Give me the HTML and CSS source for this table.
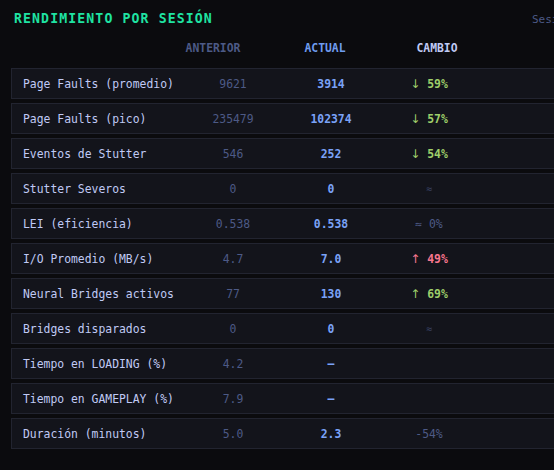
FILE: index.html
```html
<!DOCTYPE html>
<html lang="es">
<head>
<meta charset="utf-8">
<title>Rendimiento por sesión</title>
<link rel="stylesheet" href="styles.css">
</head>
<body>
<div class="panel">
  <div class="top">
    <h1 class="title">RENDIMIENTO POR SESIÓN</h1>
    <span class="sub">Sesión actual vs anterior</span>
  </div>
  <div class="head">
    <span></span>
    <span class="h-prev">ANTERIOR</span>
    <span class="h-cur">ACTUAL</span>
    <span class="h-chg">CAMBIO</span>
  </div>
  <div class="rows">
    <div class="row"><span class="label">Page Faults (promedio)</span><span class="prev">9621</span><span class="cur">3914</span><span class="chg good"><span class="arrow">↓</span> 59%</span></div>
    <div class="row"><span class="label">Page Faults (pico)</span><span class="prev">235479</span><span class="cur">102374</span><span class="chg good"><span class="arrow">↓</span> 57%</span></div>
    <div class="row"><span class="label">Eventos de Stutter</span><span class="prev">546</span><span class="cur">252</span><span class="chg good"><span class="arrow">↓</span> 54%</span></div>
    <div class="row"><span class="label">Stutter Severos</span><span class="prev">0</span><span class="cur">0</span><span class="chg same">≈</span></div>
    <div class="row"><span class="label">LEI (eficiencia)</span><span class="prev">0.538</span><span class="cur">0.538</span><span class="chg neutral">≈ 0%</span></div>
    <div class="row"><span class="label">I/O Promedio (MB/s)</span><span class="prev">4.7</span><span class="cur">7.0</span><span class="chg bad"><span class="arrow">↑</span> 49%</span></div>
    <div class="row"><span class="label">Neural Bridges activos</span><span class="prev">77</span><span class="cur">130</span><span class="chg good"><span class="arrow">↑</span> 69%</span></div>
    <div class="row"><span class="label">Bridges disparados</span><span class="prev">0</span><span class="cur">0</span><span class="chg same">≈</span></div>
    <div class="row"><span class="label">Tiempo en LOADING (%)</span><span class="prev">4.2</span><span class="cur">—</span><span class="chg"></span></div>
    <div class="row"><span class="label">Tiempo en GAMEPLAY (%)</span><span class="prev">7.9</span><span class="cur">—</span><span class="chg"></span></div>
    <div class="row"><span class="label">Duración (minutos)</span><span class="prev">5.0</span><span class="cur">2.3</span><span class="chg neutral">-54%</span></div>
  </div>
</div>
</body>
</html>
```
FILE: styles.css
```css
html, body {
  margin: 0;
  padding: 0;
  background: #0b0b0e;
  overflow: hidden;
}
body {
  font-family: "DejaVu Sans Mono", "Liberation Mono", monospace;
  font-size: 11.4px;
  color: #c0caf5;
}
.panel {
  width: 760px;
  padding: 10px 0 0 11px;
}
.top {
  display: flex;
  justify-content: space-between;
  align-items: center;
  height: 18px;
  padding-left: 3px;
  width: 718px;
}
.title {
  margin: 0;
  font-size: 13.2px;
  font-weight: bold;
  letter-spacing: 1.1px;
  color: #1fe3a2;
  line-height: 18px;
}
.sub {
  font-size: 11px;
  color: #4d5a86;
  white-space: nowrap;
  width: 200px;
}
.head {
  display: grid;
  grid-template-columns: 134px 112px 112px 112px;
  height: 20px;
  margin-top: 10px;
  padding-left: 12px;
  align-items: center;
  font-weight: bold;
  text-align: center;
}
.h-prev { color: #4d5a86; }
.h-cur { color: #6f9cf0; }
.h-chg { color: #c0caf5; }
.rows {
  margin-top: 10px;
  display: flex;
  flex-direction: column;
  gap: 4px;
}
.row {
  display: grid;
  grid-template-columns: 161px 98px 98px 98px 1fr;
  align-items: center;
  height: 29px;
  padding-left: 11px;
  background: #13141b;
  border: 1px solid #222430;
}
.label { color: #c0caf5; white-space: nowrap; }
.prev { text-align: center; color: #4d5a86; }
.cur { text-align: center; color: #7aa2f7; font-weight: bold; }
.chg { text-align: center; font-weight: bold; }
.arrow { font-family: "DejaVu Sans", sans-serif; font-size: 12px; font-weight: normal; }
.good { color: #9ece6a; }
.bad { color: #f7768e; }
.neutral { color: #4d5a86; font-weight: normal; }
.same { color: #3d4668; font-weight: normal; font-size: 10px; }
```
